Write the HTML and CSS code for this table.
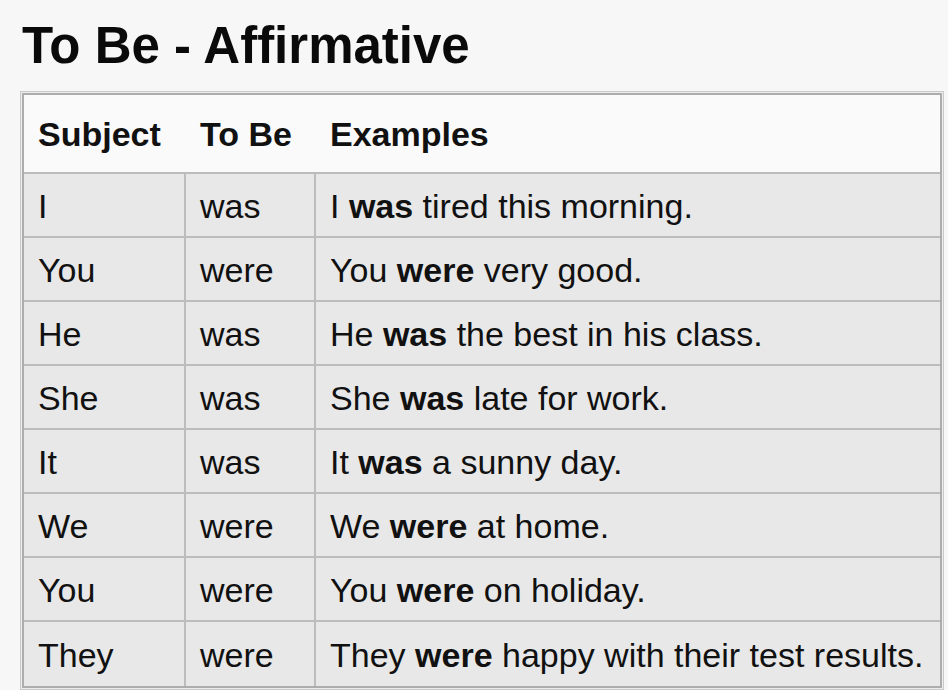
FILE: index.html
```html
<!DOCTYPE html>
<html lang="en">
<head>
<meta charset="utf-8">
<title>To Be - Affirmative</title>
<link rel="stylesheet" href="styles.css">
</head>
<body>
<h1 class="title">To Be - Affirmative</h1>
<div class="frame">
  <table class="grammar">
    <colgroup>
      <col class="c1"><col class="c2"><col class="c3">
    </colgroup>
    <thead>
      <tr class="head"><th>Subject</th><th>To Be</th><th>Examples</th></tr>
    </thead>
    <tbody>
      <tr><td>I</td><td>was</td><td>I <b>was</b> tired this morning.</td></tr>
      <tr><td>You</td><td>were</td><td>You <b>were</b> very good.</td></tr>
      <tr><td>He</td><td>was</td><td>He <b>was</b> the best in his class.</td></tr>
      <tr><td>She</td><td>was</td><td>She <b>was</b> late for work.</td></tr>
      <tr><td>It</td><td>was</td><td>It <b>was</b> a sunny day.</td></tr>
      <tr><td>We</td><td>were</td><td>We <b>were</b> at home.</td></tr>
      <tr><td>You</td><td>were</td><td>You <b>were</b> on holiday.</td></tr>
      <tr class="last"><td>They</td><td>were</td><td>They <b>were</b> happy with their test results.</td></tr>
    </tbody>
  </table>
</div>
</body>
</html>
```
FILE: styles.css
```css
html, body {
  margin: 0;
  padding: 0;
  background: #f7f7f7;
}
body {
  font-family: "Liberation Sans", Arial, sans-serif;
  color: #111;
  padding: 17px 0 0 20px;
}
.title {
  margin: 0 0 16px 2px;
  font-size: 51px;
  line-height: 58px;
  font-weight: bold;
  color: #0a0a0a;
}
.frame {
  width: 924px;
  box-sizing: border-box;
  border: 1px solid #cacaca;
  padding: 1px;
  background: #ececec;
}
.grammar {
  width: 100%;
  table-layout: fixed;
  border-collapse: separate;
  border-spacing: 0;
  border: 2px solid #adadad;
  font-size: 34px;
}
.c1 { width: 162px; }
.c2 { width: 130px; }
.grammar th,
.grammar td {
  padding: 0 0 0 14px;
  text-align: left;
  vertical-align: middle;
  white-space: nowrap;
  overflow: hidden;
}
.head {
  height: 79px;
  background: #fafafa;
}
.head th {
  font-weight: bold;
  border-bottom: 2px solid #bcbcbc;
  padding-top: 2px;
}
.grammar tbody tr {
  height: 64px;
  background: #e8e8e8;
}
.grammar td {
  border-bottom: 2px solid #bcbcbc;
  border-right: 2px solid #bcbcbc;
  padding-top: 2px;
}
.grammar td:last-child {
  border-right: none;
}
.grammar tr.last td {
  border-bottom: none;
  height: 62px;
}
.grammar b {
  font-weight: bold;
}
```
